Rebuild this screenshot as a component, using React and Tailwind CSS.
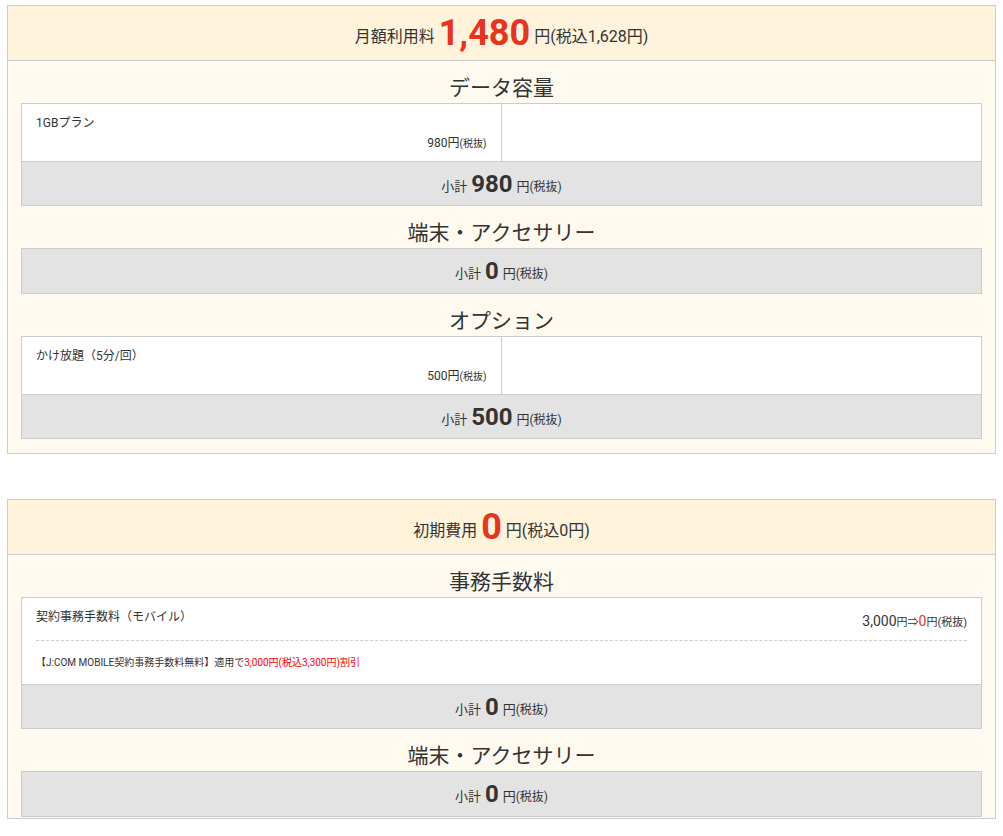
const F = { fontFamily: 'Roboto, "Noto Sans CJK JP", sans-serif' };

function Sub({ v, top = true }) {
  return (
    <div className={`h-[44px] bg-[#e3e3e3] flex items-center justify-center text-[#333] gap-1 ${top ? 'border-t border-[#ccc]' : ''}`}>
      <span className="text-[13px] mt-[6px]">小計</span>
      <span className="text-[24px] font-bold leading-none">{v}</span>
      <span className="text-[13px] mt-[6px]">円<span className="text-[12px]">(税抜)</span></span>
    </div>
  );
}

function Title({ t }) {
  return <div className="h-[42px] flex items-end justify-center text-[21px] leading-[30px] text-[#333]">{t}</div>;
}

function Item({ name, price }) {
  return (
    <div className="grid grid-cols-2 h-[57px] bg-white">
      <div className="border-r border-[#ccc] px-[14px] pt-[10px] flex flex-col">
        <div className="text-[12px] text-[#333]">{name}</div>
        <div className="text-[12px] text-[#333] text-right mt-[2px]">{price}円<span className="text-[10px]">(税抜)</span></div>
      </div>
      <div />
    </div>
  );
}

function Header({ label, big, tax }) {
  return (
    <div className="h-[55px] bg-[#fff3dc] border-b border-[#ccc] flex items-center justify-center text-[#333] gap-1">
      <span className="text-[16px] mt-[8px]">{label}</span>
      <span className="text-[36px] font-bold text-[#e8341c] leading-none">{big}</span>
      <span className="text-[16px] mt-[8px]">円({tax})</span>
    </div>
  );
}

export default function App() {
  return (
    <div style={F} className="bg-white px-[7px] pt-[5px] w-[1003px]">
      <div className="border border-[#ccc] bg-[#fffaf0]">
        <Header label="月額利用料" big="1,480" tax="税込1,628円" />
        <div className="px-[13px] pb-[14px]">
          <Title t="データ容量" />
          <div className="border border-[#ccc]">
            <Item name="1GBプラン" price="980" />
            <Sub v="980" />
          </div>
          <Title t="端末・アクセサリー" />
          <div className="border border-[#ccc]"><Sub v="0" top={false} /></div>
          <Title t="オプション" />
          <div className="border border-[#ccc]">
            <Item name="かけ放題（5分/回）" price="500" />
            <Sub v="500" />
          </div>
        </div>
      </div>
      <div className="h-[45px]" />
      <div className="border border-[#ccc] bg-[#fffaf0]">
        <Header label="初期費用" big="0" tax="税込0円" />
        <div className="px-[13px] pb-[1px]">
          <Title t="事務手数料" />
          <div className="border border-[#ccc]">
            <div className="bg-white px-[14px]">
              <div className="flex justify-between pt-[10px] h-[43px] border-b border-dashed border-[#ccc] text-[#333]">
                <span className="text-[12px]">契約事務手数料（モバイル）</span>
                <span className="text-[14px] mt-[3px]">3,000<span className="text-[11px]">円⇒</span><span className="text-[#e8341c]">0</span><span className="text-[11px]">円(税抜)</span></span>
              </div>
              <div className="h-[43px] flex items-center text-[10px] text-[#333]">
                【J:COM MOBILE契約事務手数料無料】適用で<span className="text-[#ff0000]">3,000円(税込3,300円)割引</span>
              </div>
            </div>
            <Sub v="0" />
          </div>
          <Title t="端末・アクセサリー" />
          <div className="border border-[#ccc]"><Sub v="0" top={false} /></div>
        </div>
      </div>
    </div>
  );
}
